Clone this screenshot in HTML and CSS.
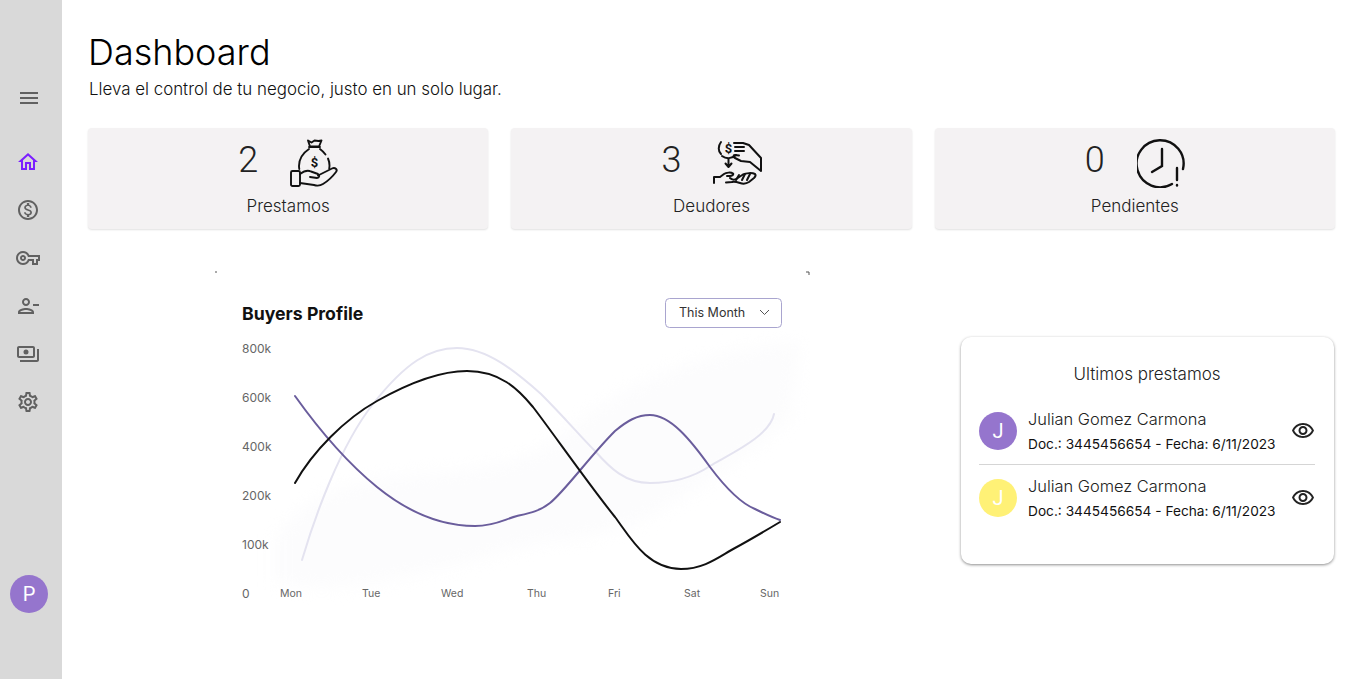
FILE: index.html
```html
<!DOCTYPE html>
<html lang="es">
<head>
    <meta charset="UTF-8">
    <title>Dashboard</title>
    <link rel="stylesheet" href="styles.css">
</head>
<body>
    <div class="layout">
        <aside class="sidebar">
            <svg class="menu-icon" viewBox="0 0 24 24"><path d="M3 18h18v-2H3v2zm0-5h18v-2H3v2zm0-7v2h18V6H3z"/></svg>
            <nav class="nav">
                <svg class="nav-icon active" viewBox="0 0 24 24"><path d="M12 5.69l5 4.5V18h-2v-6H9v6H7v-7.81l5-4.5M12 3L2 12h3v8h6v-6h2v6h6v-8h3L12 3z"/></svg>
                <svg class="nav-icon" viewBox="0 0 24 24"><path d="M12 2C6.48 2 2 6.48 2 12s4.48 10 10 10 10-4.48 10-10S17.52 2 12 2zm0 18c-4.41 0-8-3.59-8-8s3.59-8 8-8 8 3.59 8 8-3.59 8-8 8zm.31-8.86c-1.77-.45-2.34-.94-2.34-1.67 0-.84.79-1.43 2.1-1.43 1.38 0 1.9.66 1.94 1.64h1.71c-.05-1.34-.87-2.57-2.49-2.97V5H10.9v1.69c-1.51.32-2.72 1.3-2.72 2.81 0 1.79 1.49 2.69 3.66 3.21 1.95.46 2.34 1.15 2.34 1.87 0 .53-.39 1.39-2.1 1.39-1.6 0-2.23-.72-2.32-1.64H8.04c.1 1.7 1.36 2.66 2.86 2.97V19h2.34v-1.67c1.52-.29 2.72-1.16 2.73-2.77-.01-2.2-1.9-2.96-3.66-3.42z"/></svg>
                <svg class="nav-icon" viewBox="0 0 24 24"><path d="M22 19h-6v-4h-2.68c-1.14 2.42-3.6 4-6.32 4-3.86 0-7-3.14-7-7s3.14-7 7-7c2.72 0 5.17 1.58 6.32 4H24v6h-2v4zm-4-2h2v-4h2v-2H11.94l-.23-.67C11.01 8.34 9.11 7 7 7c-2.76 0-5 2.24-5 5s2.24 5 5 5c2.11 0 4.01-1.34 4.71-3.33l.23-.67H18v4zM7 15c-1.65 0-3-1.35-3-3s1.35-3 3-3 3 1.35 3 3-1.35 3-3 3zm0-4c-.55 0-1 .45-1 1s.45 1 1 1 1-.45 1-1-.45-1-1-1z"/></svg>
                <svg class="nav-icon" viewBox="0 0 24 24"><path d="M14 8c0-2.21-1.79-4-4-4S6 5.79 6 8s1.79 4 4 4 4-1.79 4-4zm-2 0c0 1.1-.9 2-2 2s-2-.9-2-2 .9-2 2-2 2 .9 2 2zM2 18v2h16v-2c0-2.66-5.33-4-8-4s-8 1.34-8 4zm2 0c.2-.71 3.3-2 6-2 2.69 0 5.77 1.28 6 2H4zM17 10h6v2h-6z"/></svg>
                <svg class="nav-icon" viewBox="0 0 24 24"><path d="M19 14V6c0-1.1-.9-2-2-2H3c-1.1 0-2 .9-2 2v8c0 1.1.9 2 2 2h14c1.1 0 2-.9 2-2zm-2 0H3V6h14v8zm-7-6.5a2.5 2.5 0 1 0 0 5 2.5 2.5 0 0 0 0-5zM23 7v11c0 1.1-.9 2-2 2H4v-2h17V7h2z"/></svg>
                <svg class="nav-icon" viewBox="0 0 24 24"><path d="M19.43 12.98c.04-.32.07-.64.07-.98 0-.34-.03-.66-.07-.98l2.11-1.65c.19-.15.24-.42.12-.64l-2-3.46c-.09-.16-.26-.25-.44-.25-.06 0-.12.01-.17.03l-2.49 1c-.52-.4-1.08-.73-1.69-.98l-.38-2.65C14.46 2.18 14.25 2 14 2h-4c-.25 0-.46.18-.49.42l-.38 2.65c-.61.25-1.17.59-1.69.98l-2.49-1c-.06-.02-.12-.03-.18-.03-.17 0-.34.09-.43.25l-2 3.46c-.13.22-.07.49.12.64l2.11 1.65c-.04.32-.07.65-.07.98 0 .33.03.66.07.98l-2.11 1.65c-.19.15-.24.42-.12.64l2 3.46c.09.16.26.25.44.25.06 0 .12-.01.17-.03l2.49-1c.52.4 1.08.73 1.69.98l.38 2.65c.03.24.24.42.49.42h4c.25 0 .46-.18.49-.42l.38-2.65c.61-.25 1.17-.59 1.69-.98l2.49 1c.06.02.12.03.18.03.17 0 .34-.09.43-.25l2-3.46c.12-.22.07-.49-.12-.64l-2.11-1.65zm-1.98-1.71c.04.31.05.52.05.73 0 .21-.02.43-.05.73l-.14 1.13.89.7 1.08.84-.7 1.21-1.27-.51-1.04-.42-.9.68c-.43.32-.84.56-1.25.73l-1.06.43-.16 1.13-.2 1.35h-1.4l-.19-1.35-.16-1.13-1.06-.43c-.43-.18-.83-.41-1.23-.71l-.91-.7-1.06.43-1.27.51-.7-1.21 1.08-.84.89-.7-.14-1.13c-.03-.31-.05-.54-.05-.74s.02-.43.05-.73l.14-1.13-.89-.7-1.08-.84.7-1.21 1.27.51 1.04.42.9-.68c.43-.32.84-.56 1.25-.73l1.06-.43.16-1.13.2-1.35h1.39l.19 1.35.16 1.13 1.06.43c.43.18.83.41 1.23.71l.91.7 1.06-.43 1.27-.51.7 1.21-1.07.85-.89.7.14 1.13zM12 8c-2.21 0-4 1.79-4 4s1.79 4 4 4 4-1.79 4-4-1.79-4-4-4zm0 6c-1.1 0-2-.9-2-2s.9-2 2-2 2 .9 2 2-.9 2-2 2z"/></svg>
            </nav>
            <div class="avatar avatar-purple side-avatar">P</div>
        </aside>

        <main class="main">
            <h1 class="title">Dashboard</h1>
            <p class="subtitle">Lleva el control de tu negocio, justo en un solo lugar.</p>

            <section class="stats">
                <div class="stat-card">
                    <div class="stat-top">
                        <span class="stat-number">2</span>
                        <svg class="stat-icon" viewBox="0 0 50 50" fill="none" stroke="#111" stroke-width="1.9" stroke-linecap="round" stroke-linejoin="round">
                            <path d="M18 2.500l3.500 2 3-2 4 .5 3-.5-2.500 6h-9z"/>
                            <path d="M19 9h11"/>
                            <path d="M19 11c-6 4-10 10-10 17 0 1 .1 2 .3 3"/>
                            <path d="M30 11c2 1.500 4 3.500 5.500 5.500"/>
                            <path d="M38 20.500c1 2.200 1.500 4.500 1.500 7 0 1-.1 2-.3 3"/>
                            <text x="24.500" y="29" class="dollar" fill="#111" stroke="none" text-anchor="middle">$</text>
                            <rect x="1" y="33" width="9" height="15" rx="1.500"/>
                            <path d="M10 36c4-3 8-4 11-2.500l7 2.500c2 1 1.500 4-1 4l-7-1"/>
                            <path d="M28 37.500l14-7c3-1.500 6 1 4 3.500-3 4-8 9-13 12-3 2-6 2-9 1l-14-2"/>
                        </svg>
                    </div>
                    <div class="stat-label">Prestamos</div>
                </div>
                <div class="stat-card">
                    <div class="stat-top">
                        <span class="stat-number">3</span>
                        <svg class="stat-icon" viewBox="0 0 50 50" fill="none" stroke="#111" stroke-width="2" stroke-linecap="round" stroke-linejoin="round">
                            <path d="M8 4c-3 4-3 9 0 12"/>
                            <text x="15.500" y="15" class="dollar" fill="#111" stroke="none" text-anchor="middle">$</text>
                            <path d="M9 18c4 3 10 3 14-1"/>
                            <path d="M21 5h9l6 2 12 13v13L37 24l-9-1-6-3c-2-1-2-3 0-3l4 .5"/>
                            <path d="M22 9h9M22 13h9"/>
                            <path d="M15.500 21v7M12.500 25.500l3 3.500 3-3.500"/>
                            <path d="M1 45v-6h6l4-3c2-1.500 7-2 9-.5 1 1-1 2.500-3 2.500h-3"/>
                            <path d="M17 40c2 2 5 2 7 .5l6-4c3-1.500 9-2 12-.5 1 1 1 2-1 4l-5 4c-3 2-6 2-9 1-3-1-6-2-8-1l-6 .5"/>
                            <path d="M26 37l-3 5M32 36l-3 6M37 36l-3 6"/>
                        </svg>
                    </div>
                    <div class="stat-label">Deudores</div>
                </div>
                <div class="stat-card">
                    <div class="stat-top">
                        <span class="stat-number">0</span>
                        <svg class="stat-icon" viewBox="0 0 50 50" fill="none" stroke="#111" stroke-width="2.400" stroke-linecap="round">
                            <path d="M35 46A23.500 23.500 0 1 1 46 31"/>
                            <path d="M25 11v17l-10 6"/>
                            <path d="M40 30v12"/>
                            <path d="M40 47v.500"/>
                        </svg>
                    </div>
                    <div class="stat-label">Pendientes</div>
                </div>
            </section>

            <section class="lower">
                <svg class="chart" viewBox="0 0 595 358">
                    <path class="blob" d="M60 270C120 170 250 230 340 170 420 100 500 80 585 70L575 150C480 220 420 270 330 270 220 300 120 330 60 310z"/>
                    <path class="mark" d="M0 1h2M591 1h3v3"/>
                    <text class="chart-title" x="27" y="48.500">Buyers Profile</text>
                    <rect class="select-box" x="450.500" y="27.500" width="116" height="29" rx="4"/>
                    <text class="select-text" x="464" y="46">This Month</text>
                    <path class="select-arrow" d="M545 39l4.500 4.500 4.500-4.500"/>
                    <text class="axis-y" x="27" y="82">800k</text>
                    <text class="axis-y" x="27" y="131">600k</text>
                    <text class="axis-y" x="27" y="180">400k</text>
                    <text class="axis-y" x="27" y="229">200k</text>
                    <text class="axis-y" x="27" y="278">100k</text>
                    <text class="axis-y" x="27" y="327">0</text>
                    <text class="axis-x" x="65" y="326">Mon</text>
                    <text class="axis-x" x="147" y="326">Tue</text>
                    <text class="axis-x" x="226" y="326">Wed</text>
                    <text class="axis-x" x="312" y="326">Thu</text>
                    <text class="axis-x" x="393" y="326">Fri</text>
                    <text class="axis-x" x="469" y="326">Sat</text>
                    <text class="axis-x" x="545" y="326">Sun</text>
                    <path class="line-light" d="M87 289C100 245 125 175 158 133S215 77 242 77C272 77 300 100 326 123 350 147 365 165 380 180 395 197 410 212 435 212 460 212 480 205 495 195 515 183 555 165 559 143"/>
                    <path class="line-purple" d="M80 125C105 160 130 190 162 216S225 255 260 255C280 255 290 248 302 245 315 242 325 240 335 232 350 220 375 185 400 160 412 150 422 144 435 144 455 144 475 168 495 196 510 216 525 232 540 238 548 242 556 246 565 249"/>
                    <path class="line-black" d="M80 212C98 180 130 148 162 130S225 100 252 100C285 100 303 118 318 136 335 158 375 215 400 246 415 266 432 298 466 298 490 298 505 285 520 277S550 260 565 251"/>
                </svg>

                <div class="recent-card">
                    <h2 class="recent-title">Ultimos prestamos</h2>
                    <div class="recent-row">
                        <div class="avatar avatar-purple">J</div>
                        <div class="recent-info">
                            <div class="recent-name">Julian Gomez Carmona</div>
                            <div class="recent-doc">Doc.: 3445456654 - Fecha: 6/11/2023</div>
                        </div>
                        <svg class="eye-icon" viewBox="0 0 24 24"><path d="M12 6c3.790 0 7.170 2.130 8.820 5.500C19.170 14.870 15.790 17 12 17s-7.170-2.130-8.820-5.500C4.830 8.130 8.210 6 12 6m0-2C7 4 2.730 7.110 1 11.500 2.730 15.890 7 19 12 19s9.270-3.110 11-7.500C21.270 7.110 17 4 12 4zm0 5c1.380 0 2.500 1.120 2.500 2.500S13.380 14 12 14s-2.500-1.120-2.500-2.500S10.620 9 12 9m0-2c-2.480 0-4.500 2.020-4.500 4.500S9.520 16 12 16s4.500-2.020 4.500-4.500S14.480 7 12 7z"/></svg>
                    </div>
                    <div class="recent-row with-border">
                        <div class="avatar avatar-yellow">J</div>
                        <div class="recent-info">
                            <div class="recent-name">Julian Gomez Carmona</div>
                            <div class="recent-doc">Doc.: 3445456654 - Fecha: 6/11/2023</div>
                        </div>
                        <svg class="eye-icon" viewBox="0 0 24 24"><path d="M12 6c3.790 0 7.170 2.130 8.820 5.500C19.170 14.870 15.790 17 12 17s-7.170-2.130-8.820-5.500C4.830 8.130 8.210 6 12 6m0-2C7 4 2.730 7.110 1 11.500 2.730 15.890 7 19 12 19s9.270-3.110 11-7.500C21.270 7.110 17 4 12 4zm0 5c1.380 0 2.500 1.120 2.500 2.500S13.380 14 12 14s-2.500-1.120-2.500-2.500S10.620 9 12 9m0-2c-2.480 0-4.500 2.020-4.500 4.500S9.520 16 12 16s4.500-2.020 4.500-4.500S14.480 7 12 7z"/></svg>
                    </div>
                </div>
            </section>
        </main>
    </div>
</body>
</html>
```

FILE: styles.css
```css
* {
    box-sizing: border-box;
}
body {
    margin: 0;
    font-family: Inter, sans-serif;
    color: #111;
    background-color: white;
}
.layout {
    display: flex;
    height: 679px;
    overflow: hidden;
}
.sidebar {
    width: 62px;
    flex-shrink: 0;
    background-color: #d9d9d9;
    display: flex;
    flex-direction: column;
    align-items: flex-start;
    padding: 86px 0 66px 16px;
}
.menu-icon {
    width: 24px;
    height: 24px;
    fill: #616161;
    margin-left: 1px;
}
.nav {
    display: flex;
    flex-direction: column;
    gap: 24px;
    margin-top: 40px;
    flex: 1;
}
.nav-icon {
    width: 24px;
    height: 24px;
    fill: #616161;
}
.nav-icon.active {
    fill: #7b1fff;
}
.avatar {
    width: 38px;
    height: 38px;
    border-radius: 50%;
    flex-shrink: 0;
    display: flex;
    align-items: center;
    justify-content: center;
    color: white;
    font-family: Roboto, sans-serif;
    font-size: 20px;
}
.side-avatar {
    margin-left: -6px;
}
.avatar-purple {
    background-color: #9575cd;
}
.avatar-yellow {
    background-color: #fff176;
}
.main {
    flex: 1;
    padding: 31px 23px 0 26px;
}
.title {
    margin: 0;
    font-size: 36px;
    font-weight: 300;
    line-height: 42px;
    color: #000;
}
.subtitle {
    margin: 4px 0 0 1px;
    font-size: 16.900px;
    font-weight: 300;
    line-height: 24px;
}
.stats {
    display: grid;
    grid-template-columns: repeat(3, 1fr);
    gap: 23px;
    margin-top: 27px;
}
.stat-card {
    height: 101px;
    background-color: #f4f2f3;
    border-radius: 4px;
    box-shadow: 0 1px 2px rgba(0, 0, 0, 0.12);
    display: flex;
    flex-direction: column;
    align-items: center;
    padding-top: 10px;
}
.stat-top {
    display: flex;
    align-items: center;
    gap: 32px;
    height: 50px;
    margin-left: 2px;
}
.stat-number {
    font-family: Roboto, sans-serif;
    font-weight: 300;
    font-size: 36px;
    margin-top: -6px;
    color: #222;
}
.stat-icon {
    width: 50px;
    height: 50px;
}
.dollar {
    font-family: Roboto, sans-serif;
    font-weight: 700;
    font-size: 13px;
}
.stat-label {
    margin-top: 6px;
    font-size: 17px;
    font-weight: 300;
    line-height: 24px;
    color: #222;
}
.lower {
    display: grid;
    grid-template-columns: 1fr 373px;
    column-gap: 24px;
    align-items: center;
    justify-items: center;
    margin-top: 42px;
    padding-right: 1px;
}
.chart {
    width: 595px;
    height: 358px;
    display: block;
}
.blob {
    fill: #fcfcfd;
    filter: blur(8px);
}
.mark {
    fill: none;
    stroke: #555;
    stroke-width: 1;
}
.chart-title {
    font-weight: 700;
    font-size: 17.700px;
    fill: #111;
}
.select-box {
    fill: white;
    stroke: #a9a5cf;
}
.select-text {
    font-size: 12.500px;
    fill: #333;
}
.select-arrow {
    fill: none;
    stroke: #555;
    stroke-width: 1;
}
.axis-y {
    font-size: 12px;
    fill: #666;
}
.axis-x {
    font-size: 10.500px;
    fill: #666;
}
.line-light,
.line-purple,
.line-black {
    fill: none;
    stroke-linecap: round;
}
.line-light {
    stroke: #e4e3f0;
    stroke-width: 2;
}
.line-purple {
    stroke: #6a5d9c;
    stroke-width: 2;
}
.line-black {
    stroke: #111;
    stroke-width: 2;
}
.recent-card {
    width: 373px;
    height: 227px;
    border-radius: 10px;
    background-color: white;
    box-shadow: 0 1px 3px rgba(0, 0, 0, 0.45);
    padding: 24px 19px 0 18px;
}
.recent-title {
    margin: 0 0 10px 0;
    font-size: 17px;
    font-weight: 300;
    line-height: 27px;
    text-align: center;
    color: #222;
}
.recent-row {
    display: flex;
    align-items: center;
    height: 66px;
}
.with-border {
    height: 67px;
    border-top: 1px solid #d5d5d5;
}
.recent-info {
    flex: 1;
    margin-left: 11px;
    margin-top: -1px;
}
.recent-name {
    font-size: 16.400px;
    font-weight: 300;
    line-height: 24px;
    color: #222;
}
.recent-doc {
    margin-top: 3px;
    font-size: 13.700px;
    line-height: 20px;
}
.eye-icon {
    width: 24px;
    height: 24px;
    fill: #222;
}
```
